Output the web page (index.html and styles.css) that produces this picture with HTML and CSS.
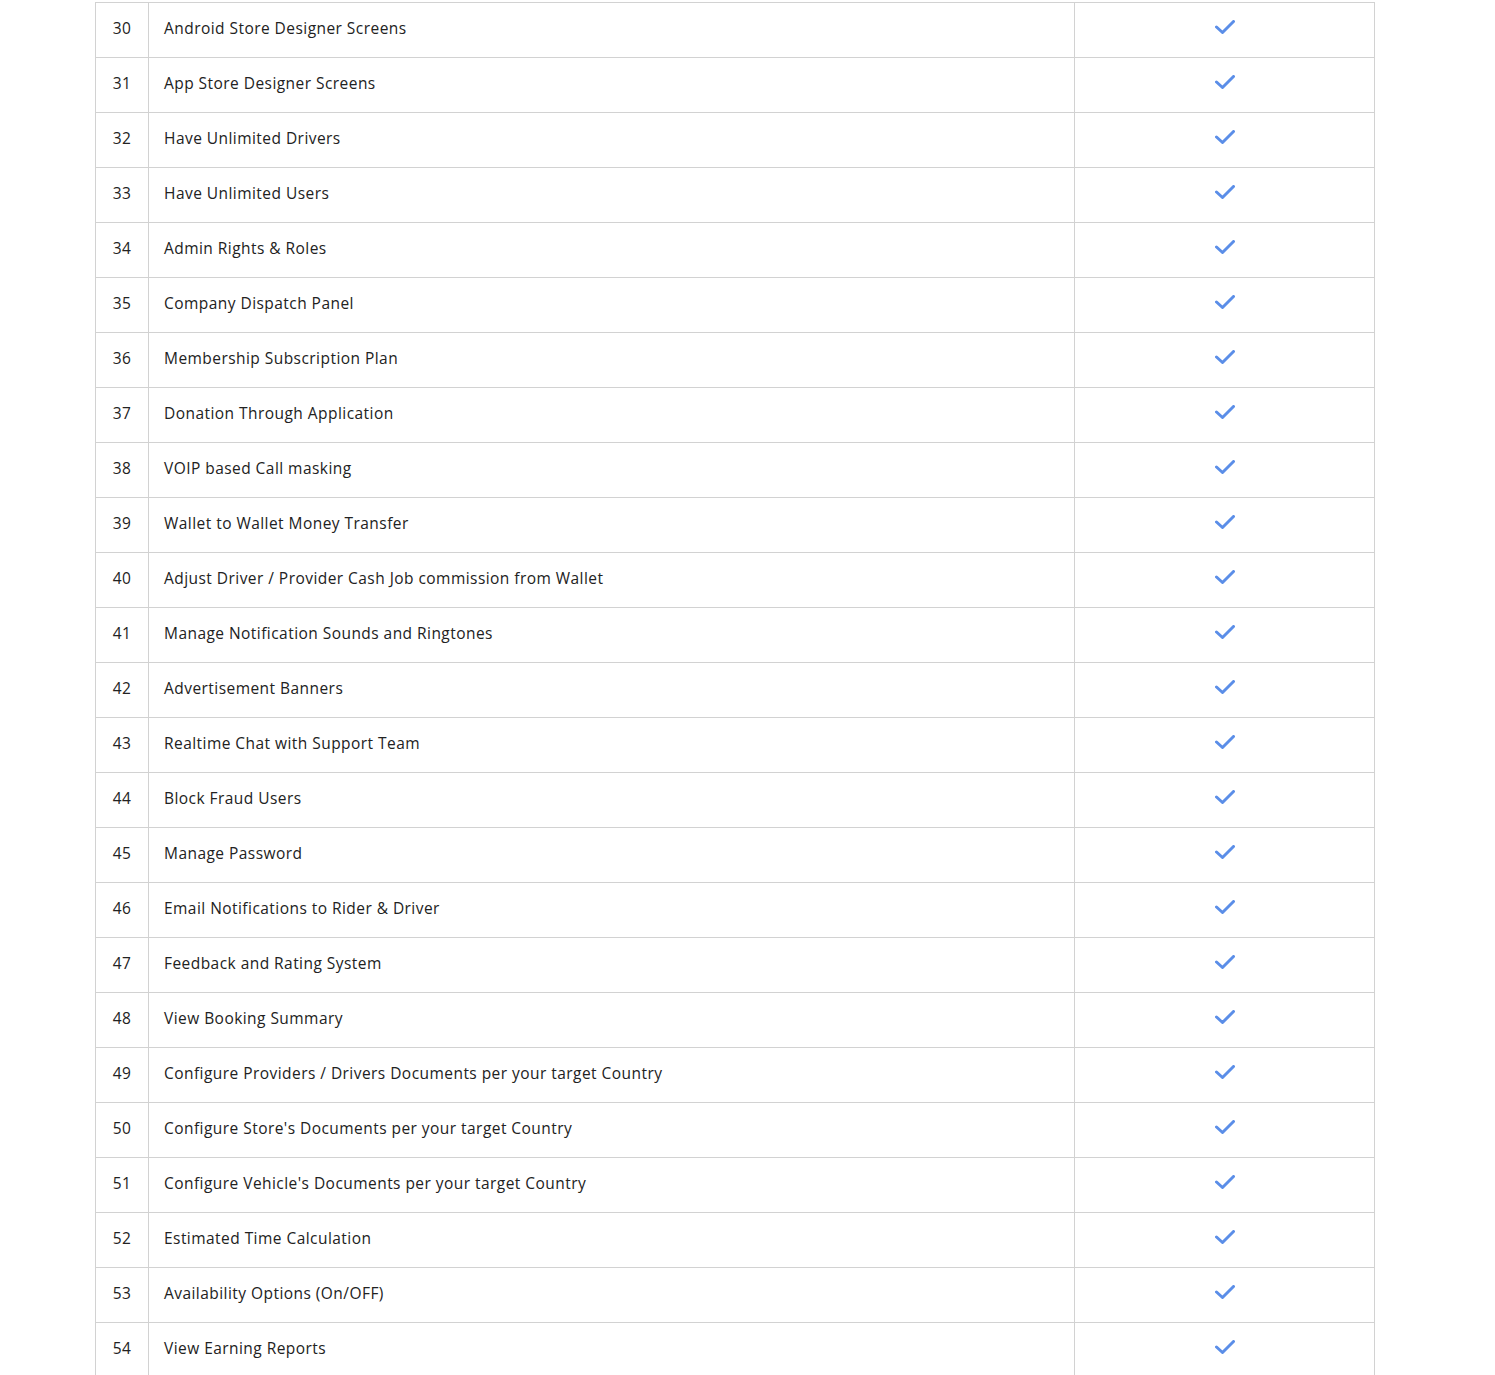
FILE: index.html
```html
<!DOCTYPE html>
<html lang="en">
<head>
  <meta charset="UTF-8" />
  <title>Features</title>
  <link rel="stylesheet" href="styles.css">
</head>
<body>
  <table class="features">
    <colgroup>
      <col class="col-num" />
      <col class="col-name" />
      <col class="col-check" />
    </colgroup>
    <tbody>
      <tr><td class="num">30</td><td class="name">Android Store Designer Screens</td><td class="check"><svg viewBox="0 0 20 14"><polyline points="1.5,7 7.5,12.5 18.5,1.5" /></svg></td></tr>
      <tr><td class="num">31</td><td class="name">App Store Designer Screens</td><td class="check"><svg viewBox="0 0 20 14"><polyline points="1.5,7 7.5,12.5 18.5,1.5" /></svg></td></tr>
      <tr><td class="num">32</td><td class="name">Have Unlimited Drivers</td><td class="check"><svg viewBox="0 0 20 14"><polyline points="1.5,7 7.5,12.5 18.5,1.5" /></svg></td></tr>
      <tr><td class="num">33</td><td class="name">Have Unlimited Users</td><td class="check"><svg viewBox="0 0 20 14"><polyline points="1.5,7 7.5,12.5 18.5,1.5" /></svg></td></tr>
      <tr><td class="num">34</td><td class="name">Admin Rights &amp; Roles</td><td class="check"><svg viewBox="0 0 20 14"><polyline points="1.5,7 7.5,12.5 18.5,1.5" /></svg></td></tr>
      <tr><td class="num">35</td><td class="name">Company Dispatch Panel</td><td class="check"><svg viewBox="0 0 20 14"><polyline points="1.5,7 7.5,12.5 18.5,1.5" /></svg></td></tr>
      <tr><td class="num">36</td><td class="name">Membership Subscription Plan</td><td class="check"><svg viewBox="0 0 20 14"><polyline points="1.5,7 7.5,12.5 18.5,1.5" /></svg></td></tr>
      <tr><td class="num">37</td><td class="name">Donation Through Application</td><td class="check"><svg viewBox="0 0 20 14"><polyline points="1.5,7 7.5,12.5 18.5,1.5" /></svg></td></tr>
      <tr><td class="num">38</td><td class="name">VOIP based Call masking</td><td class="check"><svg viewBox="0 0 20 14"><polyline points="1.5,7 7.5,12.5 18.5,1.5" /></svg></td></tr>
      <tr><td class="num">39</td><td class="name">Wallet to Wallet Money Transfer</td><td class="check"><svg viewBox="0 0 20 14"><polyline points="1.5,7 7.5,12.5 18.5,1.5" /></svg></td></tr>
      <tr><td class="num">40</td><td class="name">Adjust Driver / Provider Cash Job commission from Wallet</td><td class="check"><svg viewBox="0 0 20 14"><polyline points="1.5,7 7.5,12.5 18.5,1.5" /></svg></td></tr>
      <tr><td class="num">41</td><td class="name">Manage Notification Sounds and Ringtones</td><td class="check"><svg viewBox="0 0 20 14"><polyline points="1.5,7 7.5,12.5 18.5,1.5" /></svg></td></tr>
      <tr><td class="num">42</td><td class="name">Advertisement Banners</td><td class="check"><svg viewBox="0 0 20 14"><polyline points="1.5,7 7.5,12.5 18.5,1.5" /></svg></td></tr>
      <tr><td class="num">43</td><td class="name">Realtime Chat with Support Team</td><td class="check"><svg viewBox="0 0 20 14"><polyline points="1.5,7 7.5,12.5 18.5,1.5" /></svg></td></tr>
      <tr><td class="num">44</td><td class="name">Block Fraud Users</td><td class="check"><svg viewBox="0 0 20 14"><polyline points="1.5,7 7.5,12.5 18.5,1.5" /></svg></td></tr>
      <tr><td class="num">45</td><td class="name">Manage Password</td><td class="check"><svg viewBox="0 0 20 14"><polyline points="1.5,7 7.5,12.5 18.5,1.5" /></svg></td></tr>
      <tr><td class="num">46</td><td class="name">Email Notifications to Rider &amp; Driver</td><td class="check"><svg viewBox="0 0 20 14"><polyline points="1.5,7 7.5,12.5 18.5,1.5" /></svg></td></tr>
      <tr><td class="num">47</td><td class="name">Feedback and Rating System</td><td class="check"><svg viewBox="0 0 20 14"><polyline points="1.5,7 7.5,12.5 18.5,1.5" /></svg></td></tr>
      <tr><td class="num">48</td><td class="name">View Booking Summary</td><td class="check"><svg viewBox="0 0 20 14"><polyline points="1.5,7 7.5,12.5 18.5,1.5" /></svg></td></tr>
      <tr><td class="num">49</td><td class="name">Configure Providers / Drivers Documents per your target Country</td><td class="check"><svg viewBox="0 0 20 14"><polyline points="1.5,7 7.5,12.5 18.5,1.5" /></svg></td></tr>
      <tr><td class="num">50</td><td class="name">Configure Store's Documents per your target Country</td><td class="check"><svg viewBox="0 0 20 14"><polyline points="1.5,7 7.5,12.5 18.5,1.5" /></svg></td></tr>
      <tr><td class="num">51</td><td class="name">Configure Vehicle's Documents per your target Country</td><td class="check"><svg viewBox="0 0 20 14"><polyline points="1.5,7 7.5,12.5 18.5,1.5" /></svg></td></tr>
      <tr><td class="num">52</td><td class="name">Estimated Time Calculation</td><td class="check"><svg viewBox="0 0 20 14"><polyline points="1.5,7 7.5,12.5 18.5,1.5" /></svg></td></tr>
      <tr><td class="num">53</td><td class="name">Availability Options (On/OFF)</td><td class="check"><svg viewBox="0 0 20 14"><polyline points="1.5,7 7.5,12.5 18.5,1.5" /></svg></td></tr>
      <tr><td class="num">54</td><td class="name">View Earning Reports</td><td class="check"><svg viewBox="0 0 20 14"><polyline points="1.5,7 7.5,12.5 18.5,1.5" /></svg></td></tr>
    </tbody>
  </table>
</body>
</html>
```

FILE: styles.css
```css
body {
  margin: 0;
  padding-top: 2px;
  background: #fff;
  font-family: 'Open Sans', sans-serif;
  color: #222;
}

.features {
  margin-left: 95px;
  width: 1279px;
  border-collapse: collapse;
  table-layout: fixed;
}

.col-num {
  width: 53px;
}

.col-name {
  width: 926px;
}

.col-check {
  width: 300px;
}

.features td {
  height: 49px;
  padding: 0 0 5px;
  border: 1px solid #d2d2d2;
  font-size: 15.5px;
  letter-spacing: 0.45px;
  vertical-align: middle;
}

.num {
  text-align: center;
}

.features .name {
  padding-left: 15px;
}

.check svg {
  display: block;
  margin: -2px auto 0;
  width: 20px;
  height: 14px;
  fill: none;
  stroke: #5b8ee8;
  stroke-width: 3;
  stroke-linecap: round;
  stroke-linejoin: round;
}
```
